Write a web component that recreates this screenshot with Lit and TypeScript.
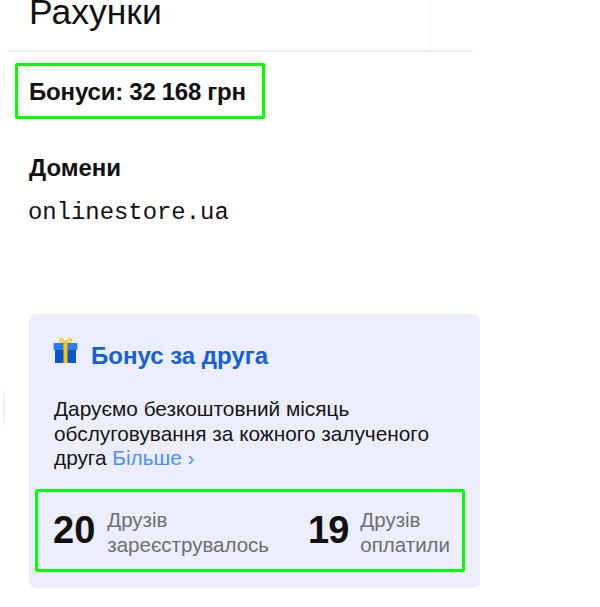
import { LitElement, html, css } from "lit";
import { customElement } from "lit/decorators.js";

@customElement("app-root")
export class AppRoot extends LitElement {
  static styles = css`
    :host {
      display: block;
      position: relative;
      width: 600px;
      height: 607px;
      overflow: hidden;
      background: #fff;
      font-family: "Liberation Sans", Arial, sans-serif;
      color: #111;
    }
    .smudge {
      position: absolute;
      left: 3px;
      width: 2px;
      background: linear-gradient(transparent, #eeeeee, transparent);
    }
    .smudge.top {
      top: 58px;
      height: 40px;
    }
    .smudge.bottom {
      top: 385px;
      height: 45px;
    }
    .header {
      box-sizing: border-box;
      width: 466px;
      height: 52px;
      margin-left: 7px;
      border-bottom: 2px solid #ececec;
      display: flex;
      justify-content: space-between;
      overflow: hidden;
    }
    h1 {
      margin: -10px 0 0 22px;
      font-size: 35.500px;
      line-height: 45px;
      font-weight: 400;
    }
    .vline {
      width: 1px;
      margin-right: 42px;
      background: #f5f5f5;
    }
    .bonus {
      box-sizing: border-box;
      width: 250px;
      height: 56px;
      margin: 11px 0 0 15px;
      padding: 2px 0 0 11px;
      border: 3px solid #00ff00;
      border-radius: 2px;
      display: flex;
      align-items: center;
      font-size: 24px;
      font-weight: 700;
      letter-spacing: -0.15px;
      word-spacing: -0.5px;
      white-space: nowrap;
    }
    h2 {
      margin: 34px 0 0 29px;
      font-size: 24px;
      line-height: 30px;
      font-weight: 700;
    }
    .domain {
      margin: 16px 0 0 28px;
      font-family: "Liberation Mono", monospace;
      font-size: 23.900px;
      line-height: 28px;
    }
    .card {
      box-sizing: border-box;
      width: 451px;
      height: 274px;
      margin: 87px 0 0 29px;
      padding: 24px 15px 0 6px;
      background: #ecedfd;
      border-radius: 8px;
    }
    .card-title {
      display: flex;
      align-items: center;
      gap: 13px;
      margin-left: 18px;
      height: 36px;
      font-size: 24px;
      font-weight: 700;
      color: #1460d6;
    }
    .card-title svg {
      margin-top: -10px;
    }
    p {
      margin: 23px 0 0 19px;
      font-size: 20.800px;
      line-height: 24.500px;
      color: #151515;
    }
    a {
      color: #4a90f5;
      text-decoration: none;
    }
    .stats {
      box-sizing: border-box;
      height: 83px;
      margin-top: 18px;
      padding: 0 12px 0 15px;
      border: 3px solid #00ff00;
      border-radius: 2px;
      display: flex;
      justify-content: space-between;
      align-items: center;
    }
    .stat {
      display: flex;
      align-items: center;
      gap: 12px;
    }
    .num {
      font-size: 38px;
      font-weight: 700;
    }
    .num.narrow {
      letter-spacing: -1px;
    }
    .label {
      margin-top: 3px;
      font-size: 20.500px;
      line-height: 25px;
      color: #6f6f74;
    }
  `;

  render() {
    return html`
      <div class="smudge top"></div>
      <div class="smudge bottom"></div>
      <div class="header">
        <h1>Рахунки</h1>
        <div class="vline"></div>
      </div>
      <div class="bonus">Бонуси: 32 168 грн</div>
      <h2>Домени</h2>
      <div class="domain">onlinestore.ua</div>
      <section class="card">
        <div class="card-title">
          <svg width="25" height="26" viewBox="0 0 25 26">
            <path d="M12.5 5C11 1.500 8 0.500 7 1.500C6 2.500 7 5 12.5 5C18 5 19 2.500 18 1.500C17 0.500 14 1.500 12.500 5Z" fill="none" stroke="#ffc400" stroke-width="1.500"/>
            <rect x="2" y="11" width="21" height="14" fill="#0a55d2"/>
            <rect x="0.500" y="5" width="24" height="7" rx="1" fill="#2a7df5"/>
            <rect x="10.500" y="4.500" width="4" height="20.500" fill="#ffc400"/>
          </svg>
          <span>Бонус за друга</span>
        </div>
        <p>Даруємо безкоштовний місяць<br />обслуговування за кожного залученого<br />друга <a>Більше ›</a></p>
        <div class="stats">
          <div class="stat">
            <span class="num">20</span>
            <span class="label">Друзів<br />зареєструвалось</span>
          </div>
          <div class="stat">
            <span class="num narrow">19</span>
            <span class="label">Друзів<br />оплатили</span>
          </div>
        </div>
      </section>
    `;
  }
}
